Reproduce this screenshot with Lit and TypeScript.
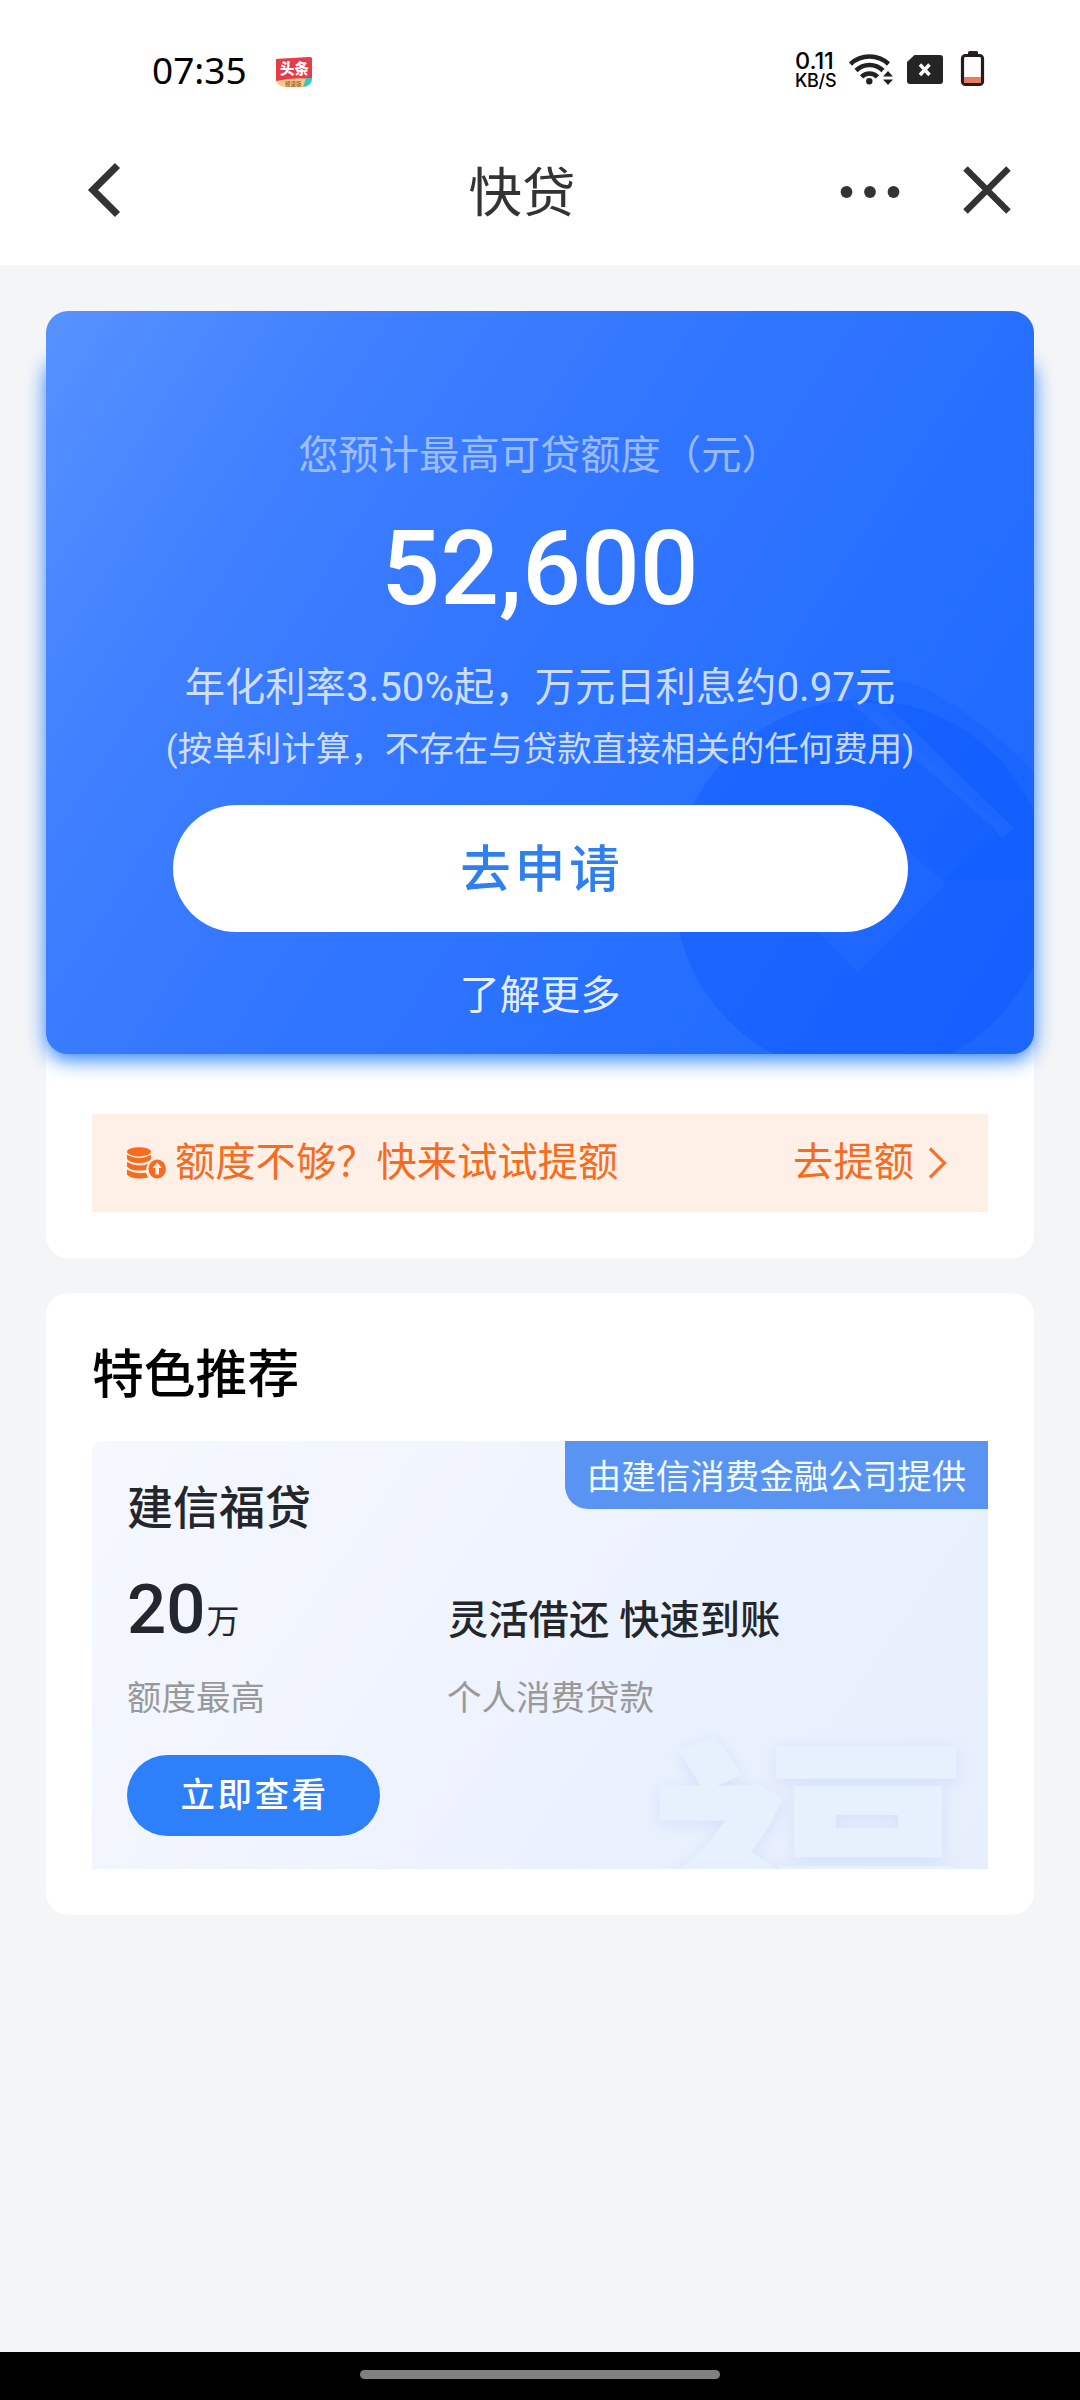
import { LitElement, html, css } from "lit";
import { customElement } from "lit/decorators.js";

@customElement("status-bar")
class StatusBar extends LitElement {
  static styles = css`
    :host {
      display: flex;
      justify-content: space-between;
      height: 122px;
      padding: 0 95px 0 152px;
      color: #000;
      font-family: "Noto Sans", "Noto Sans CJK SC", sans-serif;
    }
    .side { display: flex; height: 140px; align-items: center; }
    .time { font-size: 37px; line-height: 50px; width: 124px; white-space: nowrap; }
    .app { display: block; margin-top: 4px; }
    .app text { font-family: "Noto Sans CJK SC", sans-serif; }
    .speed {
      display: flex;
      flex-direction: column;
      width: 54px;
      font-family: Inter, sans-serif;
      font-weight: 500;
      white-space: nowrap;
    }
    .rate { font-size: 23.5px; line-height: 20px; letter-spacing: -0.1px; }
    .unit { font-size: 18px; line-height: 19px; letter-spacing: -0.3px; }
    .icons { display: block; margin-top: -2px; }
  `;
  render() {
    return html`
      <div class="side">
        <span class="time">07:35</span>
        <svg class="app" width="36" height="32" viewBox="0 0 36 32">
          <path d="M0 3 L34 1 Q36 1 36 3 V22 Q36 31 26 31 H10 Q0 31 0 22Z" fill="#fbc98a" />
          <path d="M0 3 L34 1 Q36 1 36 3 V23 Q18 21 0 25Z" fill="#e83a48" />
          <path d="M30 22 L36 22 Q36 30 27 31Z" fill="#35c8c8" />
          <text x="4" y="18" font-size="14.5" font-weight="900" fill="#fff">头条</text>
          <text x="9" y="29.5" font-size="5.5" font-weight="500" fill="#a5582a">極速版</text>
        </svg>
      </div>
      <div class="side">
        <div class="speed"><span class="rate">0.11</span><span class="unit">KB/S</span></div>
        <svg class="icons" width="136" height="38" viewBox="850 50 136 38">
          <g fill="none" stroke="#222" stroke-width="4.6">
            <path d="M851.5 64 A28 28 0 0 1 889.5 64" />
            <path d="M857 70.500 A19.500 19.500 0 0 1 884 70.500" />
            <path d="M862.500 76.800 A11.500 11.500 0 0 1 878.500 76.800" />
          </g>
          <circle cx="870.3" cy="81.3" r="3.2" fill="#222" />
          <path d="M884 76.500 L889 71 L894 76.500Z M884 79.500 L894 79.500 L889 85Z" fill="#222" />
          <path d="M915.500 55 H941 Q944 55 944 58 V81 Q944 84 941 84 H911 Q908 84 908 81 V62Z" fill="#242424" />
          <path d="M921 64.500 L930.500 75 M930.500 64.500 L921 75" stroke="#fff" stroke-width="3.4" />
          <rect x="969" y="51" width="10" height="5" rx="1.5" fill="#222" />
          <rect x="963.5" y="55.5" width="20" height="29" rx="3" fill="#fff" stroke="#241c1a" stroke-width="3.2" />
          <rect x="965" y="77" width="17" height="6" fill="#e67c62" />
        </svg>
      </div>
    `;
  }
}

@customElement("nav-bar")
class NavBar extends LitElement {
  static styles = css`
    :host {
      display: grid;
      grid-template-columns: 300px 1fr 300px;
      align-items: start;
      height: 143px;
    }
    svg { display: block; }
    .back { margin: 38px 0 0 86px; }
    .title {
      margin-top: 36px;
      padding-right: 36px;
      text-align: center;
      font: 400 53.5px/72px Roboto, "Noto Sans CJK SC", sans-serif;
      color: #333;
      white-space: nowrap;
    }
    .actions { margin: 43px 68px 0 auto; }
  `;
  render() {
    return html`
      <svg class="back" width="38" height="60" viewBox="0 0 38 60">
        <path d="M31.500 5.500 L7 30 L31.500 54.500" fill="none" stroke="#333" stroke-width="7.2" />
      </svg>
      <div class="title">快贷</div>
      <svg class="actions" width="174" height="52" viewBox="838 165 174 52">
        <g fill="#333"><circle cx="846.5" cy="192" r="5.9" /><circle cx="870" cy="192" r="5.9" /><circle cx="893.5" cy="192" r="5.9" /></g>
        <path d="M965.500 168.500 L1008.500 211.500 M1008.500 168.500 L965.500 211.500" stroke="#333" stroke-width="6.4" />
      </svg>
    `;
  }
}

@customElement("quota-card")
class QuotaCard extends LitElement {
  static styles = css`
    :host {
      display: block;
      background: #fff;
      border-radius: 22px;
      font-family: Roboto, "Noto Sans CJK SC", sans-serif;
    }
    .hero { display: grid; isolation: isolate; }
    .glow, .panel { grid-area: 1 / 1; }
    .glow {
      margin-top: 42px;
      border-radius: 22px;
      background: #2f78ff;
      box-shadow: 0 6px 20px #2d82ff;
    }
    .panel {
      position: relative;
      z-index: 0;
      box-sizing: border-box;
      height: 743px;
      padding-top: 115px;
      display: flex;
      flex-direction: column;
      align-items: center;
      overflow: hidden;
      border-radius: 22px;
      background: linear-gradient(123deg, #5792ff 0%, #4080ff 22%, #3276ff 45%, #2770ff 68%, #1b66ff 100%);
      white-space: nowrap;
    }
    .art { position: absolute; right: 0; bottom: 0; z-index: -1; }
    .label { font-size: 40.3px; line-height: 60px; color: rgba(255, 255, 255, 0.5); }
    .amount { margin-top: 28px; font-size: 103.5px; font-weight: 500; line-height: 110px; color: #fff; }
    .rate { margin-top: 36px; font-size: 40.3px; line-height: 56px; color: rgba(255, 255, 255, 0.76); }
    .note { margin-top: 8px; font-size: 34.5px; line-height: 50px; color: rgba(255, 255, 255, 0.76); }
    .apply {
      flex: none;
      margin-top: 31px;
      width: 735px;
      height: 127px;
      border-radius: 64px;
      background: #fff;
      color: #2e80ee;
      font-size: 50.5px;
      font-weight: 500;
      letter-spacing: 4px;
      line-height: 129px;
      text-align: center;
      text-indent: 4px;
    }
    .more { margin-top: 36px; font-size: 40.3px; line-height: 56px; color: rgba(255, 255, 255, 0.9); }
    .wrap { display: flow-root; height: 204px; }
    .raise {
      display: flex;
      align-items: center;
      box-sizing: border-box;
      height: 98px;
      margin: 60px 46px 0;
      padding: 0 41px 0 34px;
      background: #fef0e7;
      color: #f76b1f;
      font-size: 40.3px;
      line-height: 60px;
      white-space: nowrap;
    }
    .coins { display: block; margin-right: 8px; }
    .go { margin-left: auto; }
    .chev { display: block; margin-left: 13px; }
  `;
  render() {
    return html`
      <div class="hero">
        <div class="glow"></div>
        <div class="panel">
          <svg class="art" width="394" height="404" viewBox="640 650 394 404">
            <circle cx="862" cy="888" r="188" fill="#0552ff" opacity="0.32" />
            <path d="M872 684 Q905 676 936 694 Q990 726 1034 772 V880 H945 L1002 826 L866 702Z" fill="#0552ff" opacity="0.18" />
            <path d="M850 702 L886 704 L1014 828 L1002 838 L992 826Z" fill="#3f82ff" opacity="0.22" />
            <path d="M770 885 L858 972 L946 884 L905 848Z" fill="#3f82ff" opacity="0.18" />
          </svg>
          <div class="label">您预计最高可贷额度（元）</div>
          <div class="amount">52,600</div>
          <div class="rate">年化利率3.50%起，万元日利息约0.97元</div>
          <div class="note">(按单利计算，不存在与贷款直接相关的任何费用)</div>
          <div class="apply">去申请</div>
          <div class="more">了解更多</div>
        </div>
      </div>
      <div class="wrap">
        <div class="raise">
          <svg class="coins" width="41" height="34" viewBox="0 0 41 34">
            <g fill="#f96a1c">
              <ellipse cx="13" cy="5.8" rx="12" ry="4.6" />
              <path d="M1 8.800 Q13 15.500 25 8.800 V13 Q22 17 13 17 Q4 17 1 13Z" />
              <path d="M1 16 Q12 22 22 18 Q20 21 20 24 Q5 26 1 20.500Z" />
              <path d="M1 23.500 Q10 28.500 20 26.800 Q21 30 22.500 31.500 Q6 34.500 1 28.500Z" />
              <ellipse cx="31.200" cy="23" rx="8.700" ry="9.500" />
            </g>
            <path d="M31.200 16.500 L36 22 H33 V28.500 H29.400 V22 H26.500Z" fill="#fef0e7" />
          </svg>
          <span>额度不够？快来试试提额</span>
          <span class="go">去提额</span>
          <svg class="chev" width="20" height="36" viewBox="0 0 20 36">
            <path d="M3 3.500 L17.500 18 L3 32.500" fill="none" stroke="#f5722b" stroke-width="3.2" />
          </svg>
        </div>
      </div>
    `;
  }
}

@customElement("featured-card")
class FeaturedCard extends LitElement {
  static styles = css`
    :host {
      display: block;
      box-sizing: border-box;
      height: 622px;
      padding: 45px 46px 0;
      border-radius: 22px;
      background: #fff;
      font-family: Roboto, "Noto Sans CJK SC", sans-serif;
      white-space: nowrap;
    }
    .heading { font-size: 51.8px; font-weight: 500; line-height: 76px; color: #000; }
    .offer {
      position: relative;
      z-index: 0;
      box-sizing: border-box;
      height: 428px;
      margin-top: 27px;
      padding: 33px 35px 0;
      overflow: hidden;
      border-radius: 10px 0 0 0;
      background: linear-gradient(125deg, #f5f8ff 0%, #f0f4fe 40%, #eaf1fe 65%, #e7eefc 100%);
      color: #23272b;
    }
    .provider {
      position: absolute;
      top: 0;
      right: 0;
      width: 423px;
      height: 68px;
      border-radius: 0 0 0 23px;
      background: #5a94f2;
      color: #f2fbff;
      font-size: 34.5px;
      line-height: 72px;
      text-align: center;
    }
    .mark {
      position: absolute;
      z-index: -1;
      right: 16px;
      top: 299px;
      font-size: 306px;
      font-weight: 900;
      line-height: 306px;
      transform: scale(1.07, 0.88);
      transform-origin: top right;
      color: #e7f1fe;
      text-shadow: 0 4px 16px #d3e1fb;
    }
    .name { font-size: 46px; font-weight: 500; line-height: 68px; }
    .facts { display: grid; grid-template-columns: 320px 1fr; align-items: baseline; margin-top: 28px; }
    .figure { font-size: 69px; font-weight: 500; line-height: 80px; }
    .wan { font-size: 33px; font-weight: 400; margin-left: 1px; }
    .pitch { position: relative; top: 1px; left: 1px; font-size: 40.3px; font-weight: 500; line-height: 60px; }
    .sub { margin-top: 11px; font-size: 34.5px; line-height: 50px; color: #999; }
    .view {
      width: 253px;
      height: 81px;
      margin-top: 32px;
      border-radius: 41px;
      background: #2d80f9;
      color: #fff;
      font-size: 34.5px;
      font-weight: 500;
      line-height: 81px;
      letter-spacing: 2.5px;
      text-align: center;
      text-indent: 2px;
    }
  `;
  render() {
    return html`
      <div class="heading">特色推荐</div>
      <div class="offer">
        <div class="mark">福</div>
        <div class="provider">由建信消费金融公司提供</div>
        <div class="name">建信福贷</div>
        <div class="facts">
          <div class="figure">20<span class="wan">万</span></div>
          <div class="pitch">灵活借还 快速到账</div>
          <div class="sub">额度最高</div>
          <div class="sub">个人消费贷款</div>
        </div>
        <div class="view">立即查看</div>
      </div>
    `;
  }
}

@customElement("app-root")
class AppRoot extends LitElement {
  static styles = css`
    :host {
      display: flex;
      flex-direction: column;
      width: 1080px;
      height: 2400px;
      background: #f4f5f7;
      overflow: hidden;
    }
    .top { background: #fff; height: 265px; }
    .main { flex: 1; display: flex; flex-direction: column; gap: 35px; padding: 46px 46px 0; }
    .gesture { display: flex; justify-content: center; height: 48px; background: #000; }
    .pill { width: 360px; height: 9px; margin-top: 18px; border-radius: 5px; background: #808080; }
  `;
  render() {
    return html`
      <div class="top"><status-bar></status-bar><nav-bar></nav-bar></div>
      <div class="main"><quota-card></quota-card><featured-card></featured-card></div>
      <div class="gesture"><div class="pill"></div></div>
    `;
  }
}
